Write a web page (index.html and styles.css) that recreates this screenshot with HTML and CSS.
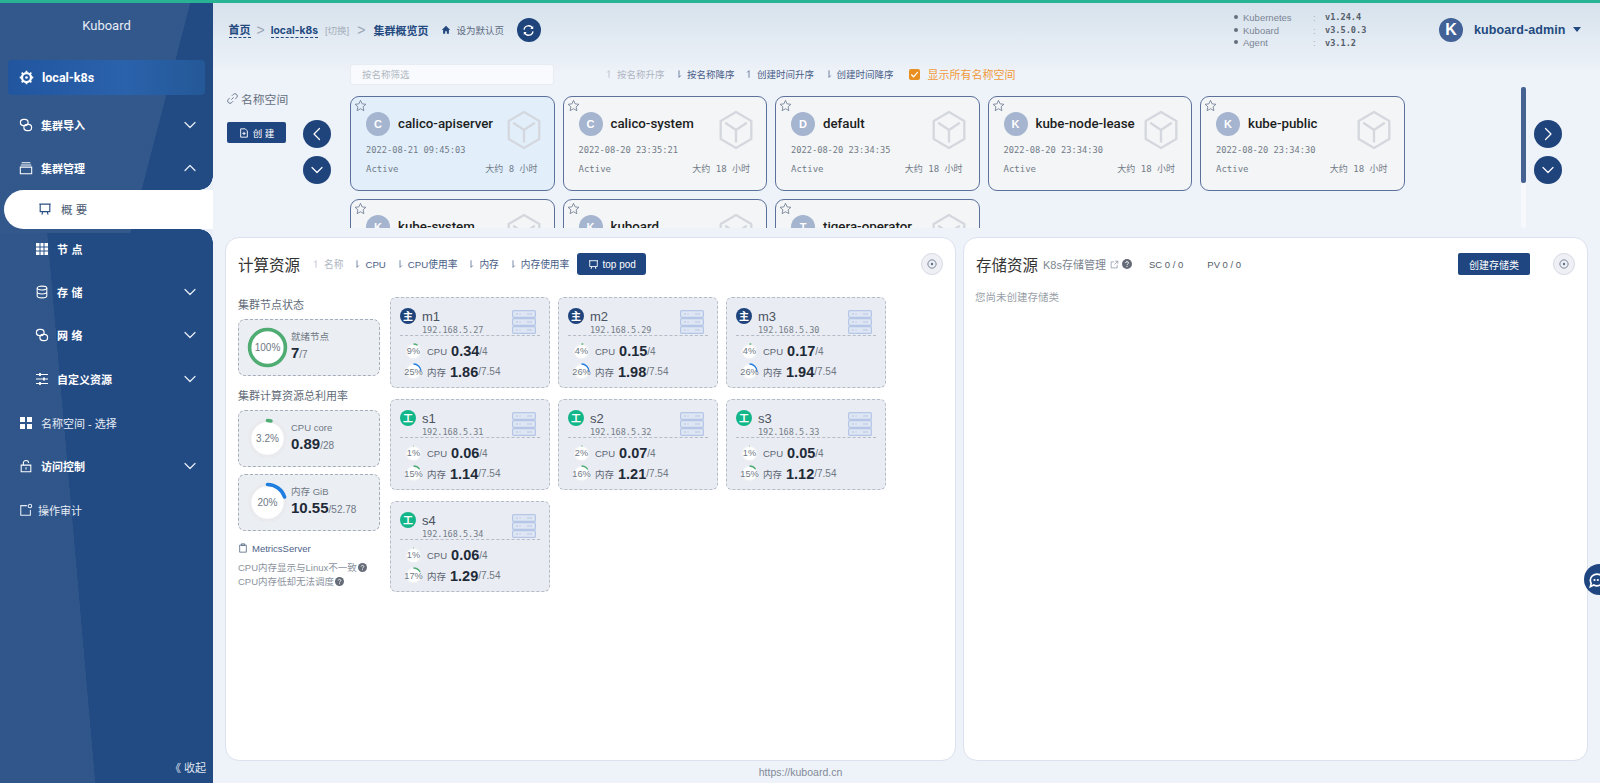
FILE: index.html
```html
<!DOCTYPE html>
<html lang="zh-CN">
<head>
<meta charset="utf-8">
<title>Kuboard</title>
<link rel="stylesheet" href="styles.css">
</head>
<body>
<svg class="defs" width="0" height="0" aria-hidden="true">
  <symbol id="cube" viewBox="0 0 40 44"><path d="M20 2 37 12V32L20 42 3 32V12Z M20 22 8 14 M20 22 32 14 M20 22V36" fill="none" stroke="currentColor" stroke-width="2.6" stroke-linejoin="round"/></symbol>
  <symbol id="star" viewBox="0 0 24 24"><path d="M12 2.5 15 9l7 .8-5.200 4.700 1.500 7L12 18l-6.300 3.500 1.500-7L2 9.800 9 9Z" fill="none" stroke="currentColor" stroke-width="1.500" stroke-linejoin="round"/></symbol>
  <symbol id="down" viewBox="0 0 16 16"><path d="M3 5.500 8 10.500 13 5.500" fill="none" stroke="currentColor" stroke-width="1.200" stroke-linecap="round" stroke-linejoin="round"/></symbol>
  <symbol id="up" viewBox="0 0 16 16"><path d="M3 10.500 8 5.500 13 10.500" fill="none" stroke="currentColor" stroke-width="1.200" stroke-linecap="round" stroke-linejoin="round"/></symbol>
  <symbol id="left" viewBox="0 0 16 16"><path d="M10.500 2.500 5 8 10.500 13.500" fill="none" stroke="currentColor" stroke-width="1.200" stroke-linecap="round" stroke-linejoin="round"/></symbol>
  <symbol id="right" viewBox="0 0 16 16"><path d="M5.500 2.500 11 8 5.500 13.500" fill="none" stroke="currentColor" stroke-width="1.200" stroke-linecap="round" stroke-linejoin="round"/></symbol>
  <symbol id="server" viewBox="0 0 24 24"><g fill="#dfe6f3" stroke="currentColor" stroke-width="1.200"><rect x=".6" y=".6" width="22.800" height="6.800" rx="1"/><rect x=".6" y="8.600" width="22.800" height="6.800" rx="1"/><rect x=".6" y="16.600" width="22.800" height="6.800" rx="1"/></g><path d="M4 4h2M7.500 4h1M15 4h5M4 12h2M7.500 12h1M15 12h5M4 20h2M7.500 20h1M15 20h5" stroke="currentColor" stroke-width="1.100"/></symbol>
  <symbol id="link2" viewBox="0 0 20 20"><g fill="none" stroke="currentColor" stroke-width="1.700"><rect x="2" y="2" width="11" height="9" rx="4.500"/><rect x="7" y="9" width="11" height="9" rx="4.500"/></g></symbol>
  <symbol id="chain" viewBox="0 0 20 20"><path d="M8 12 12 8M9 5l2.500-2.500a3.500 3.500 0 0 1 6 6L15 11M11 15l-2.500 2.500a3.500 3.500 0 0 1-6-6L5 9" fill="none" stroke="currentColor" stroke-width="1.800"/></symbol>
  <symbol id="sort-up" viewBox="0 0 8 12"><path d="M4 11V1.500L1.500 4" fill="none" stroke="currentColor" stroke-width="1"/></symbol>
  <symbol id="sort-down" viewBox="0 0 8 12"><path d="M4 1V10.500L6.500 8" fill="none" stroke="currentColor" stroke-width="1"/></symbol>
  <symbol id="board" viewBox="0 0 16 16"><path d="M1.500 2.500H14.500M2.500 2.500V11H13.500V2.500M5.500 11 4.500 14.500M10.500 11 11.500 14.500" fill="none" stroke="currentColor" stroke-width="1.300"/></symbol>
  <symbol id="focus" viewBox="0 0 16 16"><circle cx="8" cy="8" r="5.500" fill="none" stroke="currentColor" stroke-width="1.100"/><circle cx="8" cy="8" r="1.600" fill="currentColor"/></symbol>
  <symbol id="q" viewBox="0 0 16 16"><circle cx="8" cy="8" r="8" fill="currentColor"/><path d="M5.600 6.200C5.800 3.600 10.400 3.600 10.400 6.200 10.400 8 8 7.800 8 9.800M8 11.200V12.800" fill="none" stroke="#fff" stroke-width="1.500"/></symbol>
</svg>

<div class="accent"></div>
<div class="page">
  <aside class="sidebar">
    <div class="brand">Kuboard</div>
    <div class="cluster">
      <svg class="i18" viewBox="0 0 20 20"><circle cx="10" cy="10" r="6" fill="none" stroke="#fff" stroke-width="3"/><circle cx="10" cy="10" r="1.800" fill="#fff"/><path d="M10 1v3M10 16v3M1 10h3M16 10h3M3.600 3.600l2.200 2.200M14.200 14.200l2.200 2.200M3.600 16.400l2.200-2.200M14.200 5.800l2.200-2.200" stroke="#fff" stroke-width="2.400"/></svg>
      <span>local-k8s</span>
    </div>
    <nav class="nav">
      <div class="item strong first"><svg class="ico"><use href="#link2"/></svg><span class="grow">集群导入</span><svg class="chev"><use href="#down"/></svg></div>
      <div class="item strong"><svg class="ico" viewBox="0 0 16 16"><path d="M3 2h10M2 4.500h12M1.500 7h13v7.500h-13Z" fill="none" stroke="currentColor" stroke-width="1.200"/></svg><span class="grow">集群管理</span><svg class="chev"><use href="#up"/></svg></div>
      <div class="pill"><svg class="pill-icon"><use href="#board"/></svg><span>概 要</span></div>
      <div class="item sub strong first-sub"><svg class="ico" viewBox="0 0 14 14"><path d="M1 1h12v12H1Z" fill="#fff"/><path d="M5 1v12M9 1v12M1 5h12M1 9h12" stroke="#2a5189" stroke-width="1"/></svg><span class="grow wide">节点</span></div>
      <div class="item sub strong"><svg class="ico" viewBox="0 0 16 16"><g fill="none" stroke="currentColor" stroke-width="1.200"><ellipse cx="8" cy="3.500" rx="5.500" ry="2.200"/><path d="M2.500 3.500v9c0 1.300 2.500 2.200 5.500 2.200s5.500-.9 5.500-2.200v-9M2.500 8c0 1.300 2.500 2.200 5.500 2.200s5.500-.9 5.500-2.200"/></g></svg><span class="grow wide">存储</span><svg class="chev"><use href="#down"/></svg></div>
      <div class="item sub strong"><svg class="ico"><use href="#link2"/></svg><span class="grow wide">网络</span><svg class="chev"><use href="#down"/></svg></div>
      <div class="item sub strong"><svg class="ico" viewBox="0 0 14 14"><path d="M1 2.500h12M1 7h12M1 11.500h12" stroke="#fff" stroke-width="1.200"/><path d="M5 1v3M9 5.500v3M5 10v3" stroke="#fff" stroke-width="1.800"/></svg><span class="grow">自定义资源</span><svg class="chev"><use href="#down"/></svg></div>
      <div class="item"><svg class="ico" viewBox="0 0 14 14"><path d="M1 1h5v5H1ZM8 1h5v5H8ZM1 8h5v5H1ZM8 8h5v5H8Z" fill="#fff"/></svg><span class="grow">名称空间 - 选择</span></div>
      <div class="item strong"><svg class="ico" viewBox="0 0 16 16"><path d="M2.500 7h11v7.500h-11ZM5 7V4.500C5 .8 11 .8 11 4.500M8 9.500v2.500" fill="none" stroke="currentColor" stroke-width="1.200"/></svg><span class="grow">访问控制</span><svg class="chev"><use href="#down"/></svg></div>
      <div class="item audit"><svg class="ico" viewBox="0 0 16 16"><path d="M9 3H2v11h11V8" fill="none" stroke="currentColor" stroke-width="1.200"/><circle cx="12.500" cy="3.500" r="2" fill="none" stroke="currentColor" stroke-width="1.200"/></svg><span class="grow">操作审计</span></div>
    </nav>
    <div class="collapse">《 收起</div>
  </aside>

  <main class="main">
    <header class="topbar">
      <div class="crumbs">
        <a class="crumb">首页</a><span class="sep">&gt;</span>
        <a class="crumb thin">local-k8s</a><span class="switch">[切换]</span><span class="sep">&gt;</span>
        <span class="crumb-now">集群概览页</span>
        <svg class="home" viewBox="0 0 12 12"><path d="M6 1 11 6H9.500V10.500H7V7.500H5V10.500H2.500V6H1Z" fill="#23497f"/></svg>
        <span class="default">设为默认页</span>
        <span class="round refresh"><svg viewBox="0 0 16 16" width="13" height="13"><path d="M2.500 7A5.500 5.500 0 0 1 13 5.500M13.500 9A5.500 5.500 0 0 1 3 10.500" fill="none" stroke="#fff" stroke-width="1.600"/><path d="M13.800 2.500V6.200H10.200ZM2.200 13.500V9.800H5.800Z" fill="#fff"/></svg></span>
      </div>
      <dl class="versions">
        <div class="ver"><dt>Kubernetes</dt><dd>v1.24.4</dd></div>
        <div class="ver"><dt>Kuboard</dt><dd>v3.5.0.3</dd></div>
        <div class="ver"><dt>Agent</dt><dd>v3.1.2</dd></div>
      </dl>
      <div class="user"><span class="avatar">K</span><span class="uname">kuboard-admin</span><span class="caret"></span></div>
    </header>

    <section class="ns">
      <div class="ns-left">
        <div class="ns-title"><svg class="i12"><use href="#chain"/></svg>名称空间</div>
        <div class="ns-actions">
          <button class="btn create"><svg viewBox="0 0 12 12" width="10" height="10"><path d="M2 1h5.500L10 3.500V11H2ZM6 4.500v4M4 6.500h4" fill="none" stroke="#fff" stroke-width="1.100"/></svg>创 建</button>
          <div class="navs"><span class="round big"><svg class="ico16"><use href="#left"/></svg></span><span class="round big"><svg class="ico16"><use href="#down"/></svg></span></div>
        </div>
      </div>
      <div class="ns-center">
        <div class="ns-tools">
          <div class="filter">按名称筛选</div>
          <div class="sorts">
            <span class="sort off"><svg class="s"><use href="#sort-up"/></svg>按名称升序</span>
            <span class="sort"><svg class="s"><use href="#sort-down"/></svg>按名称降序</span>
            <span class="sort"><svg class="s"><use href="#sort-up"/></svg>创建时间升序</span>
            <span class="sort"><svg class="s"><use href="#sort-down"/></svg>创建时间降序</span>
          </div>
          <label class="check"><span class="box"><svg viewBox="0 0 12 12" width="11" height="11"><path d="M2.500 6 5 8.500 9.500 3.500" fill="none" stroke="#fff" stroke-width="1.300"/></svg></span>显示所有名称空间</label>
        </div>
        <div class="ns-scroll">
          <div class="ns-grid">
            <article class="card active"><svg class="star"><use href="#star"/></svg><span class="badge">C</span><h3>calico-apiserver</h3><svg class="cube"><use href="#cube"/></svg><time>2022-08-21 09:45:03</time><div class="foot"><span>Active</span><span>大约 8 小时</span></div></article>
            <article class="card"><svg class="star"><use href="#star"/></svg><span class="badge">C</span><h3>calico-system</h3><svg class="cube"><use href="#cube"/></svg><time>2022-08-20 23:35:21</time><div class="foot"><span>Active</span><span>大约 18 小时</span></div></article>
            <article class="card"><svg class="star"><use href="#star"/></svg><span class="badge">D</span><h3>default</h3><svg class="cube"><use href="#cube"/></svg><time>2022-08-20 23:34:35</time><div class="foot"><span>Active</span><span>大约 18 小时</span></div></article>
            <article class="card"><svg class="star"><use href="#star"/></svg><span class="badge">K</span><h3>kube-node-lease</h3><svg class="cube"><use href="#cube"/></svg><time>2022-08-20 23:34:30</time><div class="foot"><span>Active</span><span>大约 18 小时</span></div></article>
            <article class="card"><svg class="star"><use href="#star"/></svg><span class="badge">K</span><h3>kube-public</h3><svg class="cube"><use href="#cube"/></svg><time>2022-08-20 23:34:30</time><div class="foot"><span>Active</span><span>大约 18 小时</span></div></article>
            <article class="card"><svg class="star"><use href="#star"/></svg><span class="badge">K</span><h3>kube-system</h3><svg class="cube"><use href="#cube"/></svg></article>
            <article class="card"><svg class="star"><use href="#star"/></svg><span class="badge">K</span><h3>kuboard</h3><svg class="cube"><use href="#cube"/></svg></article>
            <article class="card"><svg class="star"><use href="#star"/></svg><span class="badge">T</span><h3>tigera-operator</h3><svg class="cube"><use href="#cube"/></svg></article>
          </div>
        </div>
      </div>
      <div class="ns-right">
        <div class="scrollbar"><div class="thumb"></div></div>
        <div class="navs"><span class="round big"><svg class="ico16"><use href="#right"/></svg></span><span class="round big"><svg class="ico16"><use href="#down"/></svg></span></div>
      </div>
    </section>

    <section class="panels">
      <div class="panel compute">
        <div class="phead">
          <h2>计算资源</h2>
          <span class="sort off"><svg class="s"><use href="#sort-up"/></svg>名称</span>
          <span class="sort"><svg class="s"><use href="#sort-down"/></svg>CPU</span>
          <span class="sort"><svg class="s"><use href="#sort-down"/></svg>CPU使用率</span>
          <span class="sort"><svg class="s"><use href="#sort-down"/></svg>内存</span>
          <span class="sort"><svg class="s"><use href="#sort-down"/></svg>内存使用率</span>
          <button class="btn top"><svg viewBox="0 0 16 16" width="11" height="11"><use href="#board"/></svg>top pod</button>
          <span class="zoom"><svg viewBox="0 0 16 16" width="12" height="12"><use href="#focus"/></svg></span>
        </div>
        <div class="cbody">
          <div class="stats">
            <h4>集群节点状态</h4>
            <div class="stat">
              <div class="ring big-ring"><svg viewBox="0 0 40 40"><circle cx="20" cy="20" r="17.500" class="r-track"/><circle cx="20" cy="20" r="17.500" class="r-val green" pathLength="100" stroke-dasharray="100 100"/></svg><span>100%</span></div>
              <div class="stext"><div class="slabel">就绪节点</div><div class="sval">7<small>/7</small></div></div>
            </div>
            <h4 class="h4b">集群计算资源总利用率</h4>
            <div class="stat">
              <div class="ring big-ring"><svg viewBox="0 0 40 40"><circle cx="20" cy="20" r="17.500" class="r-track"/><circle cx="20" cy="20" r="17.500" class="r-val green" pathLength="100" stroke-dasharray="3.2 100"/></svg><span>3.2%</span></div>
              <div class="stext"><div class="slabel">CPU core</div><div class="sval">0.89<small>/28</small></div></div>
            </div>
            <div class="stat s2">
              <div class="ring big-ring"><svg viewBox="0 0 40 40"><circle cx="20" cy="20" r="17.500" class="r-track"/><circle cx="20" cy="20" r="17.500" class="r-val blue" pathLength="100" stroke-dasharray="20 100"/></svg><span>20%</span></div>
              <div class="stext"><div class="slabel">内存 GiB</div><div class="sval">10.55<small>/52.78</small></div></div>
            </div>
            <div class="metrics"><svg viewBox="0 0 12 12" width="10" height="10"><path d="M2 2.500h8V11H2ZM4 1h4v2H4Z" fill="none" stroke="#596b85" stroke-width="1"/></svg>MetricsServer</div>
            <div class="note">CPU内存显示与Linux不一致<svg class="q"><use href="#q"/></svg></div>
            <div class="note">CPU内存低却无法调度<svg class="q"><use href="#q"/></svg></div>
          </div>
          <div class="nodes">
            <article class="node"><span class="role">主</span><div class="nname"><b>m1</b><i>192.168.5.27</i></div><svg class="srv"><use href="#server"/></svg><div class="mline"><div class="ring mini"><svg viewBox="0 0 26 26"><circle cx="13" cy="13" r="11.500" class="m-track"/><circle cx="13" cy="13" r="11.500" class="m-val green" pathLength="100" stroke-dasharray="9 100"/></svg><span>9%</span></div><em>CPU</em><strong>0.34</strong><small>/4</small></div><div class="mline"><div class="ring mini"><svg viewBox="0 0 26 26"><circle cx="13" cy="13" r="11.500" class="m-track"/><circle cx="13" cy="13" r="11.500" class="m-val blue" pathLength="100" stroke-dasharray="25 100"/></svg><span>25%</span></div><em>内存</em><strong>1.86</strong><small>/7.54</small></div></article>
            <article class="node"><span class="role">主</span><div class="nname"><b>m2</b><i>192.168.5.29</i></div><svg class="srv"><use href="#server"/></svg><div class="mline"><div class="ring mini"><svg viewBox="0 0 26 26"><circle cx="13" cy="13" r="11.500" class="m-track"/><circle cx="13" cy="13" r="11.500" class="m-val green" pathLength="100" stroke-dasharray="4 100"/></svg><span>4%</span></div><em>CPU</em><strong>0.15</strong><small>/4</small></div><div class="mline"><div class="ring mini"><svg viewBox="0 0 26 26"><circle cx="13" cy="13" r="11.500" class="m-track"/><circle cx="13" cy="13" r="11.500" class="m-val blue" pathLength="100" stroke-dasharray="26 100"/></svg><span>26%</span></div><em>内存</em><strong>1.98</strong><small>/7.54</small></div></article>
            <article class="node"><span class="role">主</span><div class="nname"><b>m3</b><i>192.168.5.30</i></div><svg class="srv"><use href="#server"/></svg><div class="mline"><div class="ring mini"><svg viewBox="0 0 26 26"><circle cx="13" cy="13" r="11.500" class="m-track"/><circle cx="13" cy="13" r="11.500" class="m-val green" pathLength="100" stroke-dasharray="4 100"/></svg><span>4%</span></div><em>CPU</em><strong>0.17</strong><small>/4</small></div><div class="mline"><div class="ring mini"><svg viewBox="0 0 26 26"><circle cx="13" cy="13" r="11.500" class="m-track"/><circle cx="13" cy="13" r="11.500" class="m-val blue" pathLength="100" stroke-dasharray="26 100"/></svg><span>26%</span></div><em>内存</em><strong>1.94</strong><small>/7.54</small></div></article>
            <article class="node"><span class="role worker">工</span><div class="nname"><b>s1</b><i>192.168.5.31</i></div><svg class="srv"><use href="#server"/></svg><div class="mline"><div class="ring mini"><svg viewBox="0 0 26 26"><circle cx="13" cy="13" r="11.500" class="m-track"/><circle cx="13" cy="13" r="11.500" class="m-val green" pathLength="100" stroke-dasharray="1 100"/></svg><span>1%</span></div><em>CPU</em><strong>0.06</strong><small>/4</small></div><div class="mline"><div class="ring mini"><svg viewBox="0 0 26 26"><circle cx="13" cy="13" r="11.500" class="m-track"/><circle cx="13" cy="13" r="11.500" class="m-val green" pathLength="100" stroke-dasharray="15 100"/></svg><span>15%</span></div><em>内存</em><strong>1.14</strong><small>/7.54</small></div></article>
            <article class="node"><span class="role worker">工</span><div class="nname"><b>s2</b><i>192.168.5.32</i></div><svg class="srv"><use href="#server"/></svg><div class="mline"><div class="ring mini"><svg viewBox="0 0 26 26"><circle cx="13" cy="13" r="11.500" class="m-track"/><circle cx="13" cy="13" r="11.500" class="m-val green" pathLength="100" stroke-dasharray="2 100"/></svg><span>2%</span></div><em>CPU</em><strong>0.07</strong><small>/4</small></div><div class="mline"><div class="ring mini"><svg viewBox="0 0 26 26"><circle cx="13" cy="13" r="11.500" class="m-track"/><circle cx="13" cy="13" r="11.500" class="m-val green" pathLength="100" stroke-dasharray="16 100"/></svg><span>16%</span></div><em>内存</em><strong>1.21</strong><small>/7.54</small></div></article>
            <article class="node"><span class="role worker">工</span><div class="nname"><b>s3</b><i>192.168.5.33</i></div><svg class="srv"><use href="#server"/></svg><div class="mline"><div class="ring mini"><svg viewBox="0 0 26 26"><circle cx="13" cy="13" r="11.500" class="m-track"/><circle cx="13" cy="13" r="11.500" class="m-val green" pathLength="100" stroke-dasharray="1 100"/></svg><span>1%</span></div><em>CPU</em><strong>0.05</strong><small>/4</small></div><div class="mline"><div class="ring mini"><svg viewBox="0 0 26 26"><circle cx="13" cy="13" r="11.500" class="m-track"/><circle cx="13" cy="13" r="11.500" class="m-val green" pathLength="100" stroke-dasharray="15 100"/></svg><span>15%</span></div><em>内存</em><strong>1.12</strong><small>/7.54</small></div></article>
            <article class="node"><span class="role worker">工</span><div class="nname"><b>s4</b><i>192.168.5.34</i></div><svg class="srv"><use href="#server"/></svg><div class="mline"><div class="ring mini"><svg viewBox="0 0 26 26"><circle cx="13" cy="13" r="11.500" class="m-track"/><circle cx="13" cy="13" r="11.500" class="m-val green" pathLength="100" stroke-dasharray="1 100"/></svg><span>1%</span></div><em>CPU</em><strong>0.06</strong><small>/4</small></div><div class="mline"><div class="ring mini"><svg viewBox="0 0 26 26"><circle cx="13" cy="13" r="11.500" class="m-track"/><circle cx="13" cy="13" r="11.500" class="m-val green" pathLength="100" stroke-dasharray="17 100"/></svg><span>17%</span></div><em>内存</em><strong>1.29</strong><small>/7.54</small></div></article>
          </div>
        </div>
      </div>
      <div class="panel storage">
        <div class="phead">
          <h2>存储资源</h2>
          <span class="k8s">K8s存储管理</span>
          <svg viewBox="0 0 12 12" width="9" height="9" class="ext"><path d="M9.500 6.500V10.500H1.500V2.500H5.500M7 1.500H10.500V5M10.500 1.500 6 6" fill="none" stroke="#8a94a3" stroke-width="1"/></svg>
          <svg class="q"><use href="#q"/></svg>
          <span class="count sc">SC 0 / 0</span>
          <span class="count pv">PV 0 / 0</span>
          <button class="btn addsc">创建存储类</button>
          <span class="zoom"><svg viewBox="0 0 16 16" width="12" height="12"><use href="#focus"/></svg></span>
        </div>
        <p class="empty">您尚未创建存储类</p>
      </div>
    </section>
    <footer class="foot-link">https://kuboard.cn</footer>
  </main>
</div>
<div class="chat"><svg viewBox="0 0 24 24" width="20" height="20"><path d="M4 12a8 7 0 0 1 16 0 8 7 0 0 1-12 6l-4 2 1-4a7 7 0 0 1-1-4Z" fill="none" stroke="#fff" stroke-width="2"/><circle cx="9" cy="12" r="1.300" fill="#fff"/><circle cx="13" cy="12" r="1.300" fill="#fff"/></svg></div>
</body>
</html>
```
FILE: styles.css
```css
* { box-sizing: border-box; }
html, body { margin: 0; height: 100%; overflow: hidden; }
body {
  font-family: "Liberation Sans", "Noto Sans CJK SC", sans-serif;
  background: #eef2f9;
  color: #333;
  font-size: 12px;
  position: relative;
}
.defs { position: absolute; }
svg { display: block; flex: none; }
h2, h3, h4, p, dl, dd { margin: 0; font-weight: normal; }
em, i { font-style: normal; }

.accent { height: 3px; background: #27b394; }
.page { display: flex; height: 780px; }

/* sidebar */
.sidebar {
  width: 213px; flex: none; display: flex; flex-direction: column; color: #fff;
  background:
    linear-gradient(104.6deg, rgba(255,255,255,.07) 0 69.6%, transparent 69.8%) 0 0/100% 230px no-repeat,
    linear-gradient(85deg, rgba(255,255,255,.06) 0 36.4%, transparent 36.6%) 0 230px/100% 550px no-repeat,
    #234b83;
}
.brand { height: 46px; padding-top: 13px; text-align: center; font: 13px/20px Roboto, sans-serif; color: #e8edf5; }
.cluster {
  margin: 11px 8px 0; height: 35px; border-radius: 4px; padding: 0 11px; display: flex; align-items: center; gap: 8px;
  background: linear-gradient(90deg, #21569f, #2a62ab 60%, #245897);
  font: 700 12.500px Roboto, "Noto Sans CJK SC", sans-serif;
}
.i18 { width: 15px; height: 15px; }
.ico { width: 14px; height: 14px; }
.ico16 { width: 16px; height: 16px; }
.i12 { width: 11px; height: 11px; color: #6e7b8f; }
.nav { display: flex; flex-direction: column; }
.item { height: 43.700px; display: flex; align-items: center; padding: 0 15px 0 19px; gap: 8px; font-size: 11px; color: #e8eef7; }
.item.first { margin-top: 8px; height: 43px; }
.item.strong { font-weight: 700; color: #fff; }
.item.sub { padding-left: 35px; gap: 8px; }
.item.audit { gap: 5px; }
.grow { flex: 1; }
.wide { letter-spacing: 3.500px; }
.chev { width: 16px; height: 16px; color: #e8eef7; }
.item.first-sub { height: 41px; }
.pill {
  position: relative; height: 39px; margin: 0 0 0 4px; padding-left: 34px; display: flex; align-items: center; gap: 9px;
  background: #fff; border-radius: 20px 0 0 20px; color: #4a5a70; font-size: 11.500px;
}
.pill::before, .pill::after { content: ""; position: absolute; right: 0; width: 14px; height: 14px; }
.pill::before { top: -14px; background: radial-gradient(circle at 0 0, transparent 13.500px, #eaeff7 14px); }
.pill::after { bottom: -14px; background: radial-gradient(circle at 0 100%, transparent 13.500px, #eaeff7 14px); }
.pill-icon { color: #2a4f83; width: 14px; height: 14px; }
.collapse { margin-top: auto; height: 24px; text-align: right; padding-right: 7px; font-size: 11px; color: #dfe6f0; }

/* main */
.main { flex: 1; min-width: 0; display: flex; flex-direction: column; padding: 0 12px; background: linear-gradient(#d6e2ec, #eef2f9 70px); position: relative; }
.topbar { height: 53px; display: flex; align-items: center; }
.crumbs { display: flex; align-items: center; flex: 1; padding-left: 3.500px; padding-top: 1px; color: #23497f; }
.crumb { font-weight: 700; font-size: 11px; border-bottom: 1px dashed #23497f; line-height: 14px; }
.crumb.thin { font: 700 10.300px/14px Inter, sans-serif; }
.sep { color: #9aa5b5; margin: 0 6px; font: 14px "Liberation Sans"; }
.switch { color: #a4adba; font-size: 9.500px; margin-left: 7px; }
.switch + .sep { margin: 0 8px; }
.crumb-now { font-weight: 700; font-size: 11px; }
.home { width: 10px; height: 10px; margin: 0 5px 0 13px; }
.default { color: #5d6b7f; font-size: 9.500px; }
.round { display: flex; align-items: center; justify-content: center; border-radius: 50%; background: #1f447c; color: #fff; }
.refresh { width: 24px; height: 24px; margin-left: 13px; }
.versions { width: 205px; font-size: 9.500px; color: #7b8493; margin-top: 1px; }
.ver { display: flex; height: 12.700px; align-items: center; padding-left: 9px; position: relative; }
.ver::before { content: ""; position: absolute; left: 0; top: 4px; width: 4px; height: 4px; border-radius: 50%; background: #646e7c; }
.ver dt { width: 82px; position: relative; }
.ver dt::after { content: ":"; position: absolute; left: 70px; color: #aab2be; }
.ver dd { font: 700 8.600px "DejaVu Sans Mono", monospace; color: #555e6b; }
.user { width: 148px; display: flex; align-items: center; margin-right: 1px; }
.avatar { width: 24px; height: 24px; border-radius: 50%; background: #416197; color: #fff; font: 700 16px/24px "Liberation Sans"; text-align: center; }
.uname { font: 700 12.500px "Liberation Sans", sans-serif; color: #234a80; margin-left: 11px; letter-spacing: .1px; }
.caret { border: 4px solid transparent; border-top: 5px solid #234a80; border-bottom: 0; margin-left: 7px; }

.ns { display: flex; height: 176px; margin-top: 7px; }
.ns-left { width: 125px; padding: 26px 0 0 2px; flex: none; position: relative; }
.ns-title { display: flex; align-items: center; gap: 3px; font-size: 11.800px; color: #646f7e; height: 18px; }
.ns-actions { display: flex; gap: 17px; margin-top: 13px; align-items: flex-start; }
.btn { border: 0; border-radius: 2px; background: #1f4680; color: #fff; font: 9.500px "Liberation Sans", "Noto Sans CJK SC", sans-serif; display: flex; align-items: center; justify-content: center; padding: 0; }
.create { width: 59px; height: 21px; gap: 4px; margin-top: 2px; }
.navs { display: flex; flex-direction: column; gap: 8px; }
.big { width: 28px; height: 28px; }
.ns-center { flex: 1; min-width: 0; }
.ns-tools { display: flex; align-items: center; height: 22px; }
.filter { width: 204px; height: 21px; background: #f8fafd; border: 1px solid #e8edf4; border-radius: 3px; padding-left: 11px; font-size: 9.500px; line-height: 19px; color: #b0b7c2; }
.sorts { display: flex; margin-left: 52px; gap: 11.500px; }
.sort { display: inline-flex; align-items: center; gap: 5px; color: #4a6087; font-size: 9.500px; white-space: nowrap; }
.sort.off { color: #aeb6c2; }
.phead .sort { font-size: 9.700px; }
.s { width: 6px; height: 10px; }
.check { display: flex; align-items: center; gap: 8px; margin-left: 15px; color: #ef9a3a; font-size: 11px; }
.box { width: 11px; height: 11px; border-radius: 2px; background: #e88f1f; border: 0; }
.ns-scroll { height: 132px; overflow: hidden; margin-top: 11px; }
.ns-grid { display: grid; grid-template-columns: repeat(5, 204.500px); gap: 8px; }
.card {
  position: relative; height: 95px; border: 1px solid #5b709b; border-radius: 9px; background: #f4f5f6;
  display: grid; grid-template-columns: 24px 1fr; column-gap: 8px; padding: 15px 16px 0 15px; align-content: start;
}
.card.active { background: #e2effb; }
.star { position: absolute; left: 3px; top: 2px; width: 13px; height: 13px; color: #6b7a90; }
.badge { width: 24px; height: 24px; border-radius: 50%; background: #a5b4cf; color: #fff; text-align: center; font: 700 11px/24px "Liberation Sans"; }
.card h3 { font: 500 13.300px/24px Roboto, sans-serif; color: #1c1e22; white-space: nowrap; }
.cube { position: absolute; right: 12px; top: 12px; width: 36px; height: 42px; color: #d4d8de; }
.card time { grid-column: 1 / -1; font: 8.700px "DejaVu Sans Mono", monospace; color: #717b88; margin-top: 8px; line-height: 12px; }
.foot { grid-column: 1 / -1; display: flex; justify-content: space-between; margin-top: 6px; font: 9px "DejaVu Sans Mono", "Noto Sans CJK SC", monospace; color: #717b88; line-height: 14px; }
.ns-right { width: 68px; flex: none; position: relative; display: flex; justify-content: flex-end; padding-right: 26px; padding-top: 57px; }
.scrollbar { position: absolute; left: 1px; top: 24px; width: 5px; height: 141px; border-radius: 2px; background: #f7f9fc; }
.thumb { height: 96px; background: #466292; border-radius: 2px; }

.panels { display: flex; gap: 7px; height: 524px; margin-top: -2px; }
.panel { background: #fff; border: 1px solid #dbe1ee; border-radius: 14px; }
.compute { width: 731px; padding: 0 12px; }
.storage { flex: 1; padding: 0 12px; }
.phead { display: flex; align-items: center; height: 52px; gap: 11px; }
.phead h2 { font-size: 15.500px; color: #333; margin-right: 2px; }
.zoom { width: 22px; height: 22px; border-radius: 50%; background: #eef0f5; border: 1px solid #d5dae3; display: flex; align-items: center; justify-content: center; color: #607085; margin-left: auto; }
.btn.top { width: 69px; height: 22px; gap: 4px; font-size: 10px; border-radius: 3px; margin-left: -3px; }
.cbody { display: flex; gap: 10px; margin-top: 2px; }
.stats { width: 142px; flex: none; }
.stats h4 { font-size: 11px; line-height: 16px; color: #616b78; height: 22px; margin-top: 5px; }
.stats h4.h4b { margin-top: 12px; height: 22px; }
.stat { height: 57px; border: 1px dashed #a7aebb; border-radius: 7px; background: #ebeef3; display: flex; align-items: center; gap: 3px; padding-left: 8px; }
.stext { padding-bottom: 5px; }
.s2 { margin-top: 7px; }
.ring { position: relative; flex: none; display: flex; align-items: center; justify-content: center; color: #6f7884; }
.ring svg { position: absolute; inset: 0; transform: rotate(-90deg); }
.ring span { position: relative; }
.big-ring { width: 41px; height: 41px; font-size: 10px; }
.r-track { fill: #fff; stroke: #e9ebee; stroke-width: 3.500; }
.r-val { fill: none; stroke-width: 3.500; stroke-linecap: round; }
.blue { stroke: #1f7ee0; }
.green { stroke: #4fad74; }
.slabel { font-size: 9.500px; color: #6f7884; line-height: 14px; }
.sval { font: 700 15px/17px "Liberation Sans", sans-serif; color: #1f2a38; }
.sval small { font: 10px "Liberation Sans"; color: #6f7884; }
.metrics { display: flex; align-items: center; gap: 4px; color: #4d6288; font-size: 9.500px; margin-top: 10px; height: 14px; }
.note { display: flex; align-items: center; gap: 1px; color: #8b929d; font-size: 9.500px; height: 14px; }
.metrics + .note { margin-top: 5px; }
.q { width: 9px; height: 9px; color: #656c78; }
.nodes { display: grid; grid-template-columns: repeat(3, 160px); grid-auto-rows: 91px; gap: 11px 8px; align-content: start; margin-top: 5px; }
.node { position: relative; border: 1px dashed #b5bbc7; border-radius: 6px; background: #e9ecf2; padding: 12px 9px 0; }
.role { position: absolute; left: 9px; top: 10px; width: 16px; height: 16px; border-radius: 50%; background: #1f447c; color: #fff; text-align: center; font: 700 10px/16px "Noto Sans CJK SC"; }
.role.worker { background: #13b688; }
.nname { border-bottom: 1px dashed #b5bbc7; padding-left: 22px; height: 26px; margin-bottom: 5px; }
.nname b { display: block; font: 13px/14px "Liberation Sans"; color: #49525f; }
.nname i { display: block; font: 8.500px/11px "DejaVu Sans Mono", monospace; color: #737c88; margin-top: 1px; }
.srv { position: absolute; right: 13px; top: 11px; width: 24px; height: 26px; color: #b5c6e6; }
.mline { display: flex; align-items: center; height: 20.500px; margin-left: 5px; }
.mini { width: 17px; height: 17px; font-size: 9.200px; margin-right: 5px; }
.m-track { fill: #fff; stroke: #eef0f3; stroke-width: 2; }
.m-val { fill: none; stroke-width: 2; }
.mline em { font-size: 9.500px; color: #5c6572; margin-right: 4px; }
.mline strong { font: 700 14.500px "Liberation Sans", sans-serif; color: #1f2a38; }
.mline small { font-size: 10px; color: #6f7884; }
.k8s { font-size: 11px; color: #7d8590; margin-left: -8px; }
.ext { margin-left: -7px; }
.storage .q { margin-left: -8px; width: 10px; height: 10px; }
.count { font-size: 9.500px; color: #535b67; }
.sc { margin-left: 6px; }
.pv { margin-left: 13px; }
.btn.addsc { width: 72px; height: 22px; margin-left: auto; border-radius: 2px; font-size: 10px; }
.storage .zoom { margin-left: 12px; }
.empty { font-size: 10.500px; color: #999fa8; margin: -1px 0 0 -1px; }
.foot-link { text-align: center; font-size: 10.500px; color: #838b97; height: 20px; line-height: 22px; padding-right: 212px; }
.chat { position: absolute; left: 1584px; top: 564px; width: 31px; height: 31px; border-radius: 50%; background: #1f4680; display: flex; align-items: center; padding-left: 3px; }
```
